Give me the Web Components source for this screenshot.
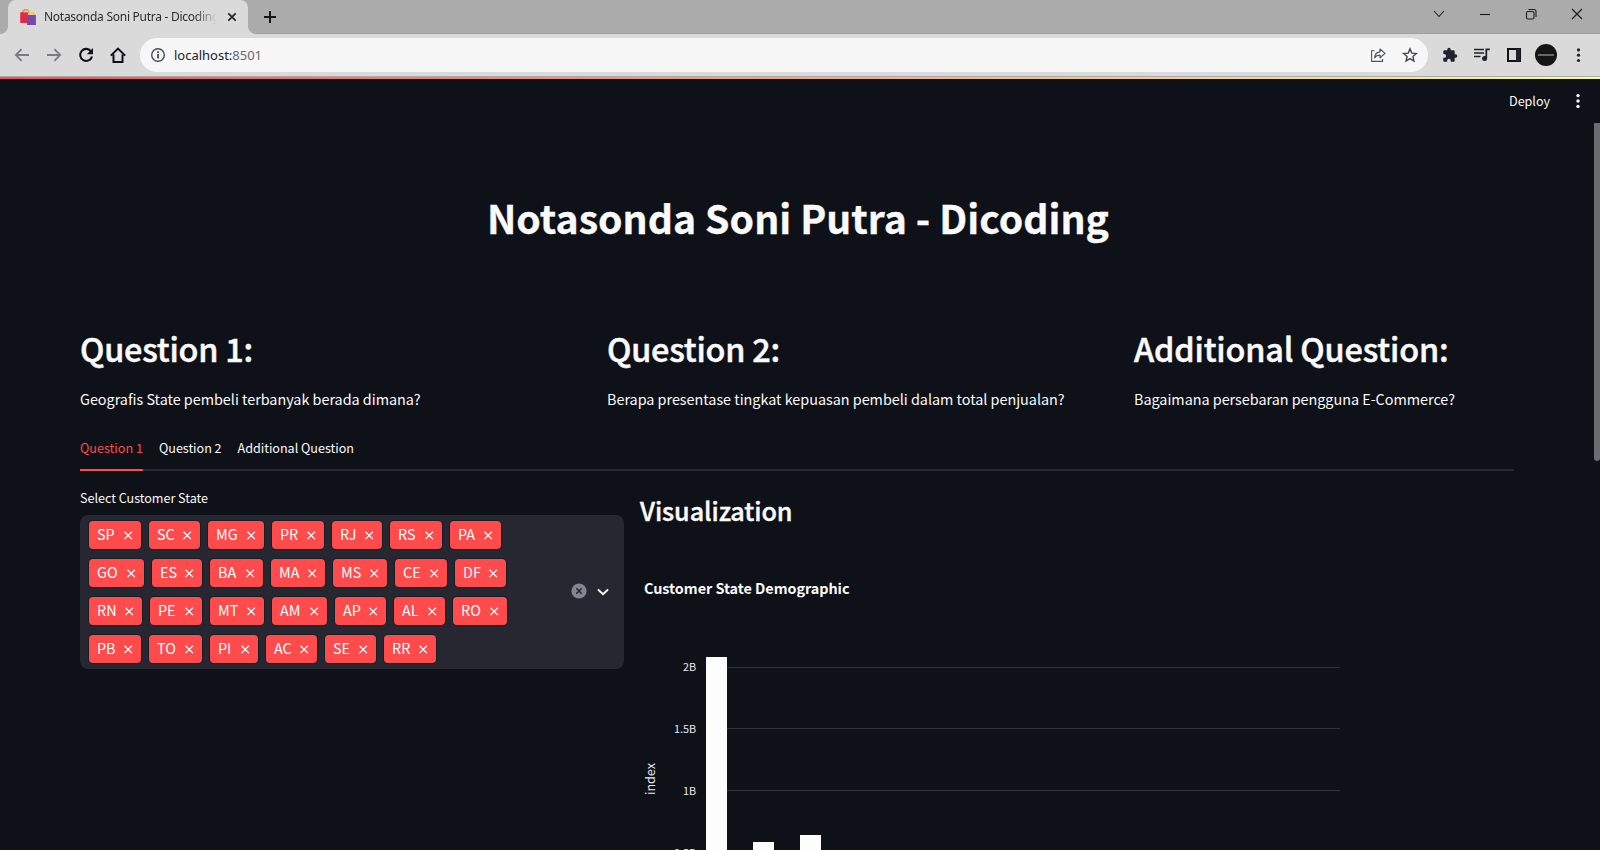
<!DOCTYPE html>
<html lang="id">
<head>
<meta charset="utf-8">
<title>Notasonda Soni Putra - Dicoding</title>
<style>
html,body{margin:0;height:100%;overflow:hidden;background:#0e1117}
</style>
</head>
<body>
<browser-window></browser-window>
<script>
const SANS = '"Noto Sans CJK SC","Noto Sans",sans-serif';
function define(name, render, setup){
  customElements.define(name, class extends HTMLElement{
    connectedCallback(){
      if(this.shadowRoot) return;
      this.attachShadow({mode:'open'}).innerHTML = render(this);
      if(setup) setup(this);
    }
  });
}

/* one line of text whose tracking is set so that it spans a given width */
define('fit-text', el=>`<style>:host{display:block;width:max-content;white-space:nowrap}span{display:inline-block}</style><span><slot></slot></span>`, el=>{
  const w = +el.getAttribute('w');
  if(!w) return;
  const span = el.shadowRoot.querySelector('span');
  span.style.letterSpacing = ((w - span.getBoundingClientRect().width) / el.textContent.length) + 'px';
});

const ICONS = {
  back:'<path d="M15 8H2M7.6 2.2 1.8 8l5.8 5.8" fill="none" stroke="#7b7c80" stroke-width="1.8"/>',
  forward:'<path d="M1 8h13M8.4 2.2 14.2 8l-5.8 5.8" fill="none" stroke="#7b7c80" stroke-width="1.8"/>',
  reload:'<path d="M13.2 4.6A6 6 0 1 0 14 9.4" fill="none" stroke="#101114" stroke-width="2.1"/><path d="M15 1v6.3H8.8z" fill="#101114"/>',
  home:'<path d="M3.500 7.500V15h9V7.500M.8 8.600 8 1.600l7.200 7" fill="none" stroke="#101114" stroke-width="2"/>',
  info:'<circle cx="8" cy="8" r="6.3" fill="none" stroke="#4a4d52" stroke-width="1.4"/><path d="M7.2 7h1.7v4.6H7.2zM7.2 4.2h1.7v1.7H7.2z" fill="#3c4043"/>',
  share:'<path d="M4.5 3.8H1.6v10.6h11V12" fill="none" stroke="#505358" stroke-width="1.1"/><path d="M4.6 10.8C5 6.8 7.2 5 10 4.8V2l5 4.4-5 4.4V8.1C7.6 8 6 8.800 4.600 10.800z" fill="none" stroke="#505358" stroke-width="1.2" stroke-linejoin="round"/>',
  star:'<path d="m8 1.9 1.8 4.2 4.600.4-3.500 3 1 4.500L8 11.600 4.100 14l1-4.500-3.500-3 4.600-.4z" fill="none" stroke="#43464b" stroke-width="1.400"/>',
  puzzle:'<path d="M13.600 7.300h-.9V4.600c0-.7-.6-1.300-1.300-1.300H8.700v-.8a1.700 1.700 0 0 0-3.400 0v.8H2.600c-.7 0-1.300.6-1.300 1.300v2.500h1a1.850 1.850 0 0 1 0 3.700h-1v2.600c0 .7.6 1.300 1.300 1.300h2.500v-1a1.850 1.850 0 0 1 3.700 0v1h2.600c.7 0 1.300-.6 1.300-1.300v-2.700h.9a1.700 1.700 0 0 0 0-3.400z" fill="#1f2228"/>',
  media:'<path d="M0 2.500h10M0 6h10M0 9.500h6.500" stroke="#1f2228" stroke-width="1.700"/><path d="M12.300 11V2.300h3.500M11.500 9.200V12" fill="none" stroke="#1f2228" stroke-width="1.800"/><circle cx="10.600" cy="11.600" r="2.500" fill="#1f2228"/>',
  panel:'<path d="M2 2h12v12H2z" fill="none" stroke="#111318" stroke-width="2"/><path d="M10 2h4v12h-4z" fill="#1f2228"/>',
  dots:'<g fill="#1f2228"><circle cx="7.500" cy="2.900" r="1.600"/><circle cx="7.500" cy="8.200" r="1.600"/><circle cx="7.500" cy="13.500" r="1.600"/></g>',
  menu:'<g fill="#fafafa"><circle cx="8" cy="2.600" r="1.700"/><circle cx="8" cy="8" r="1.700"/><circle cx="8" cy="13.400" r="1.700"/></g>',
  down:'<path d="m3 5 5 5.500L13 5" fill="none" stroke="#202020" stroke-width="1.100"/>',
  min:'<path d="M3 8.500h10" stroke="#151515" stroke-width="1.100"/>',
  restore:'<rect x="3.500" y="5.500" width="7.500" height="7.500" rx="1.500" fill="none" stroke="#202020" stroke-width="1.100"/><path d="M5.500 3.500H11a2 2 0 0 1 2 2V11" fill="none" stroke="#202020" stroke-width="1.100"/>',
  close:'<path d="m3 3 10 10M13 3 3 13" stroke="#202020" stroke-width="1.200"/>',
  tabclose:'<path d="m4.300 4.300 7.400 7.400M11.700 4.300 4.300 11.700" stroke="#202226" stroke-width="1.700"/>',
  plus:'<path d="M8 2v12M2 8h12" stroke="#15171d" stroke-width="2"/>',
  bags:'<path d="M2.500 4.200C3-.5 8-.5 8.600 3" fill="none" stroke="#f28a1c" stroke-width="1.300"/><path d="M.2 3.300h8.200V14H.2z" fill="#dc2d48"/><path d="M8.300 6.500c.3-4.500 5.400-4.500 6 0" fill="none" stroke="#fbc53c" stroke-width="1.300"/><path d="M7 5.900h8.900V16H7z" fill="#764aa8"/>',
  x:'<path d="m4.500 4.700 7.400 7.400M11.900 4.700 4.500 12.100" stroke="#fff" stroke-width="1.250"/>',
  clear:'<circle cx="8" cy="8" r="7.600" fill="#838595"/><path d="m5.300 5.300 5.400 5.400M10.700 5.300 5.300 10.700" stroke="#20212b" stroke-width="1.400"/>',
  chevron:'<path d="m3.500 6 4.500 4.300L12.500 6" fill="none" stroke="#fafafa" stroke-width="1.900" stroke-linecap="round"/>'
};
define('ui-icon', el=>`<style>:host{display:block;width:16px;height:16px;flex:none}svg{display:block;width:100%;height:100%}</style><svg viewBox="0 0 16 16">${ICONS[el.getAttribute('name')]}</svg>`);

define('tab-strip', ()=>`<style>
:host{display:flex;height:34px;background:#ababab;padding-left:8px;box-shadow:inset 0 -1px #a0a0a0}
.tab{position:relative;display:flex;align-items:center;box-sizing:border-box;width:240px;height:34px;border-radius:8px 8px 0 0;background:#dadada;padding-left:12px}
.tab::before,.tab::after{content:"";position:absolute;bottom:0;width:8px;height:8px;background:radial-gradient(circle at 0 0,#ababab 7.500px,#dadada 8.500px)}
.tab::before{left:-8px}.tab::after{right:-8px;background:radial-gradient(circle at 100% 0,#ababab 7.500px,#dadada 8.500px)}
.t{width:172px;margin-left:8px;font:12px/18px "Noto Sans",sans-serif;color:#2b2d31;-webkit-mask:linear-gradient(90deg,#000 150px,transparent 173px)}
.c{margin-left:8px}.p{margin:9px 0 0 14px}
.w{margin:6px 15px 0 auto;display:flex;gap:30px}
</style><div class="tab"><ui-icon name="bags"></ui-icon><div class="t"><fit-text w="175">Notasonda Soni Putra - Dicoding</fit-text></div><ui-icon class="c" name="tabclose"></ui-icon></div>
<ui-icon class="p" name="plus"></ui-icon>
<div class="w"><ui-icon name="down"></ui-icon><ui-icon name="min"></ui-icon><ui-icon name="restore"></ui-icon><ui-icon name="close"></ui-icon></div>`);

define('tool-bar', ()=>`<style>
:host{display:flex;align-items:center;gap:16px;height:42px;padding:0 13px 0 14px;background:#dadada;border-bottom:1px solid #a3adb3}
.o{flex:1;display:flex;align-items:center;height:34px;margin:0 -2px;border-radius:17px;background:#f7f7f7;padding:0 10px;color:#1f2126}
.u{font:13px/20px "Noto Sans",sans-serif;margin:-1px auto 0 8px;color:#202328}
.u i{font-style:normal;color:#65686d}
.s{margin-right:16px}
.a{width:22px;height:22px;border-radius:50%;margin:0 -2px 0 -3px;background:linear-gradient(#0000 10.500px,#666 10.500px 12px,#0000 12px) center/16px 22px no-repeat,#151515}
</style><ui-icon name="back"></ui-icon><ui-icon name="forward"></ui-icon><ui-icon name="reload"></ui-icon><ui-icon name="home"></ui-icon>
<div class="o"><ui-icon name="info"></ui-icon><fit-text class="u" w="88">localhost:<i>8501</i></fit-text><ui-icon class="s" name="share"></ui-icon><ui-icon name="star"></ui-icon></div>
<ui-icon name="puzzle"></ui-icon><ui-icon name="media"></ui-icon><ui-icon name="panel"></ui-icon><div class="a"></div><ui-icon name="dots"></ui-icon>`);

define('question-card', el=>`<style>
:host{display:block}
.h{font-size:32.400px;font-weight:500;line-height:44px;-webkit-text-stroke:.5px currentColor}
.b{font-size:14.400px;line-height:24px;margin-top:17px}
</style><fit-text class="h" w="${el.getAttribute('hw')}">${el.getAttribute('heading')}</fit-text><fit-text class="b" w="${el.getAttribute('bw')}">${el.getAttribute('body')}</fit-text>`);

define('page-tabs', ()=>`<style>
:host{display:flex;gap:16px;height:40px;box-shadow:inset 0 -2px #262730;font-size:12.600px;line-height:33px}
div{box-sizing:border-box;height:40px}
.on{color:#ff4b4b;border-bottom:2px solid #ff4b4b}
</style><div class="on"><fit-text w="63">Question 1</fit-text></div><div><fit-text w="62.500">Question 2</fit-text></div><div><fit-text w="116.500">Additional Question</fit-text></div>`);

define('state-tag', el=>`<style>
:host{display:flex;align-items:center;justify-content:space-between;box-sizing:border-box;height:28px;border-radius:4px;background:#ff4b4b;color:#fff;padding:0 5px 0 8px;font-size:14.400px;line-height:26px;box-shadow:0 0 0 1px #132029}
fit-text{margin-top:-2px}
</style><fit-text><slot></slot></fit-text><ui-icon name="x"></ui-icon>`, el=>{el.style.width=el.getAttribute('w')+'px'});

const ROWS = [
 [['SP',52],['SC',51],['MG',56],['PR',52],['RJ',50],['RS',52],['PA',51]],
 [['GO',55],['ES',50],['BA',53],['MA',54],['MS',54],['CE',52],['DF',51]],
 [['RN',53],['PE',52],['MT',54],['AM',55],['AP',51],['AL',51],['RO',54]],
 [['PB',52],['TO',53],['PI',48],['AC',51],['SE',51],['RR',52]]];
define('multi-select', ()=>`<style>
:host{display:block}
.l{font-size:12.600px;line-height:20px}
.box{display:flex;align-items:center;box-sizing:border-box;width:544px;height:154px;margin-top:7px;border-radius:8px;background:#262730;padding:0 13px 0 9px}
.tags{flex:1;display:grid;gap:10px}
.r{display:flex;gap:8px}
.c{margin-right:8px;margin-top:-2px}.v{margin-top:-1px}
</style><fit-text class="l" w="128">Select Customer State</fit-text><div class="box"><div class="tags">${ROWS.map(r=>`<div class="r">${r.map(([t,w])=>`<state-tag w="${w}">${t}</state-tag>`).join('')}</div>`).join('')}</div><ui-icon class="c" name="clear"></ui-icon><ui-icon class="v" name="chevron"></ui-icon></div>`);

define('bar-chart', ()=>`<style>
:host{display:block}
.h{font-size:25.200px;font-weight:500;line-height:36px;margin-top:4px;-webkit-text-stroke:.4px currentColor}
.t{font-size:14.400px;font-weight:700;line-height:24px;margin:48px 0 0 4px}
svg{display:block;margin-top:40px}
text{font-size:10.800px;fill:#e6eaf1}
</style><fit-text class="h" w="152.500">Visualization</fit-text><fit-text class="t" w="205.500">Customer State Demographic</fit-text>
<svg width="720" height="230" viewBox="640 640 720 230">
<path d="M706 667.500h634M706 728.500h634M706 790.500h634" stroke="#31333b"/>
<g fill="#fdfdfe"><path d="M706 657h21v213h-21zM753 842h21v28h-21zM800 835h21v35h-21z"/></g>
<g text-anchor="end"><text x="696" y="671">2B</text><text x="696" y="733" textLength="22">1.5B</text><text x="696" y="795">1B</text><text x="696" y="857" textLength="22">0.5B</text></g>
<text transform="translate(654.500 795) rotate(-90)" style="font-size:12.600px" textLength="32">index</text>
</svg>`);

define('app-page', ()=>`<style>
:host{display:flex;flex-direction:column;position:relative;height:773px;overflow:hidden;background:#0e1117;color:#fafafa;font-family:${SANS}}
:host>*{flex:none}
.bar{height:2px;background:linear-gradient(90deg,#ff4b4b,#fffd80)}
.top{display:flex;justify-content:flex-end;align-items:center;height:44px;padding-right:14px;gap:20px;font-size:12.600px;line-height:20px}
.title{font-size:39.200px;font-weight:700;line-height:52px;margin:68px auto 0;position:relative;left:-2px;-webkit-text-stroke:.3px currentColor}
.q{display:grid;grid-template-columns:527px 527px 1fr;margin:83px 0 0 80px;height:105px}
page-tabs{margin:0 86px 0 80px}
.g{display:grid;grid-template-columns:544px 1fr;column-gap:16px;padding-left:80px;margin-top:17px}
.sb{position:absolute;right:0;top:46px;width:6px;height:338px;background:#6b6c70;border-radius:0 0 3px 3px}
</style><div class="bar"></div><div class="top"><fit-text w="41">Deploy</fit-text><ui-icon name="menu"></ui-icon></div>
<fit-text class="title" w="622">Notasonda Soni Putra - Dicoding</fit-text>
<div class="q">
<question-card heading="Question 1:" hw="173" body="Geografis State pembeli terbanyak berada dimana?" bw="340.500"></question-card>
<question-card heading="Question 2:" hw="173" body="Berapa presentase tingkat kepuasan pembeli dalam total penjualan?" bw="457.500"></question-card>
<question-card heading="Additional Question:" hw="314.500" body="Bagaimana persebaran pengguna E-Commerce?" bw="321"></question-card>
</div>
<page-tabs></page-tabs>
<div class="g"><multi-select></multi-select><bar-chart></bar-chart></div>
<div class="sb"></div>`);

define('browser-window', ()=>`<style>:host{display:block;width:1600px;height:850px;overflow:hidden}</style><tab-strip></tab-strip><tool-bar></tool-bar><app-page></app-page>`);
</script>
</body>
</html>
